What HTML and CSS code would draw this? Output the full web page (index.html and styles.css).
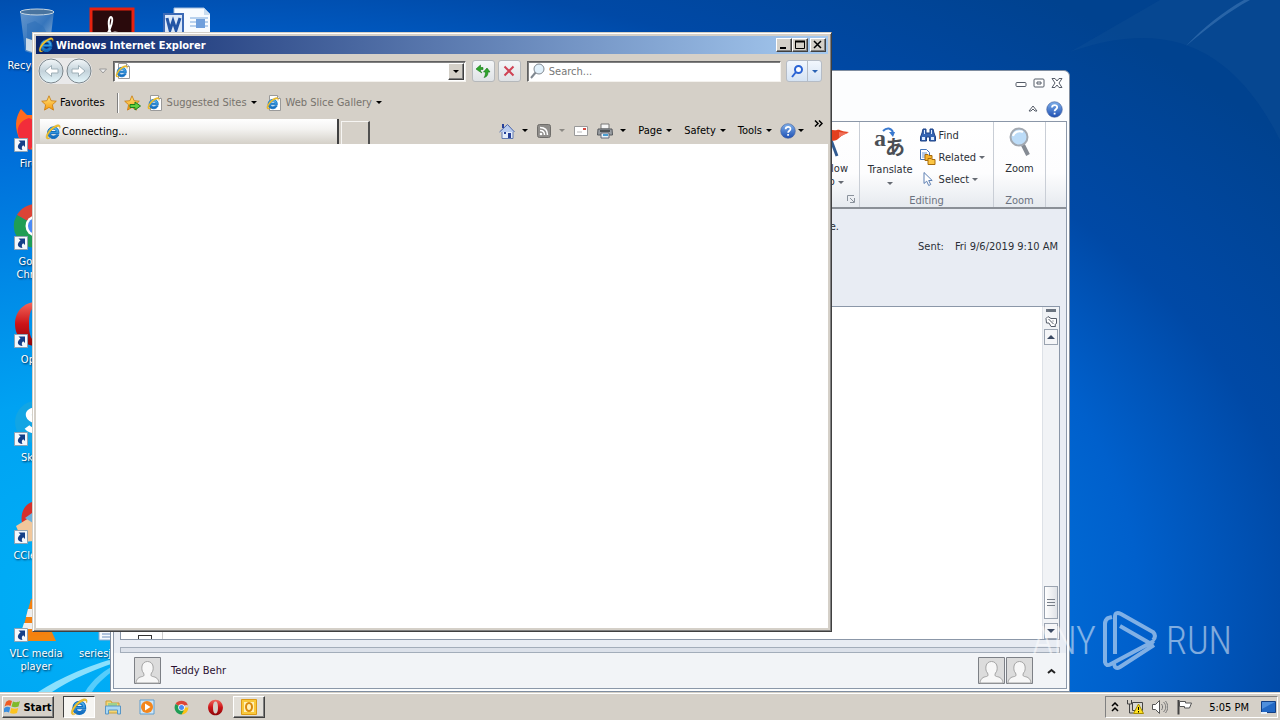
FILE: index.html
```html
<!DOCTYPE html>
<html lang="en">
<head>
    <meta charset="UTF-8">
    <meta name="viewport" content="width=device-width, initial-scale=1.0">
    <title>Desktop</title>
    <link rel="stylesheet" href="styles.css">
</head>
<body>
    <!-- shared icons -->
    <svg class="sprite" aria-hidden="true">
        <defs>
            <linearGradient id="g-ie" x1="0" y1="0" x2="0" y2="1"><stop offset="0" stop-color="#5fc3f5"/><stop offset="1" stop-color="#0b62b8"/></linearGradient>
            <linearGradient id="g-bin" x1="0" y1="0" x2="1" y2="1"><stop offset="0" stop-color="#a9c4dc" stop-opacity=".6"/><stop offset=".5" stop-color="#4d83bd" stop-opacity=".7"/><stop offset="1" stop-color="#d5e2ea" stop-opacity=".9"/></linearGradient>
            <linearGradient id="g-opera" x1="0" y1="0" x2="0" y2="1"><stop offset="0" stop-color="#f2675c"/><stop offset=".5" stop-color="#cc1418"/><stop offset="1" stop-color="#8c0508"/></linearGradient>
            <linearGradient id="g-nav" x1="0" y1="0" x2="0" y2="1"><stop offset="0" stop-color="#f4f8fa"/><stop offset=".5" stop-color="#c3d2da"/><stop offset="1" stop-color="#e6f8fd"/></linearGradient>
            <linearGradient id="g-star" x1="0" y1="0" x2="0" y2="1"><stop offset="0" stop-color="#ffe680"/><stop offset="1" stop-color="#f79a0c"/></linearGradient>
            <linearGradient id="g-help" x1="0" y1="0" x2="0" y2="1"><stop offset="0" stop-color="#7fb0ea"/><stop offset="1" stop-color="#1d4fb4"/></linearGradient>
        </defs>
        <symbol id="ie" viewBox="0 0 16 16">
            <path d="M13.9 9.6H5.6c.1 1.600 1.300 2.500 2.900 2.500 1.100 0 2-.5 2.500-1.300h2.700c-.8 2.300-2.800 3.700-5.300 3.700-3.400 0-5.800-2.400-5.800-5.700 0-3.400 2.500-5.900 5.900-5.900 3.300 0 5.400 2.400 5.400 5.700zM5.700 7.500h5.400C11 6 9.900 5.200 8.500 5.200S6 6 5.700 7.500z" fill="url(#g-ie)" stroke="#0d6fc4" stroke-width="1"/>
            <path d="M2.600 14.900C.2 14.700.700 10.500 4 6.600 7.600 2.300 12.700-.4 14.600 1.200c.9.800.7 2.100.1 3.300.2-1.300-.1-2-1.100-2.100-2.200-.1-5.700 2.200-8.300 5.300-2.300 2.800-3.300 5.600-2 6.200.6.300 1.500 0 2.300-.5-.9.900-2 1.600-3 1.500z" fill="#f6c52c" stroke="#b98b10" stroke-width=".3"/>
        </symbol>
        <symbol id="iepage" viewBox="0 0 16 16">
            <path d="M3.500.5h8l3 3v12h-11z" fill="#fff" stroke="#9a9a9a"/>
            <path d="M11.500.5v3h3" fill="#e6e6e6" stroke="#9a9a9a"/>
            <svg x="0" y="2" width="13" height="13" viewBox="0 0 16 16"><use href="#ie"/></svg>
        </symbol>
        <symbol id="star" viewBox="0 0 16 16">
            <path d="M8 .8l2.100 4.900 5.200.500-3.900 3.600 1.100 5.300L8 12.400l-4.500 2.700 1.100-5.300L.7 6.200l5.200-.5z" fill="url(#g-star)" stroke="#c9780a" stroke-width=".8"/>
        </symbol>
        <symbol id="shortcut" viewBox="0 0 14 14">
            <path d="M.5.500h13v13H.5z" fill="#f4f8fc" stroke="#8fa3b5"/>
            <path d="M4.500 2.500H11v6.500L9.200 7.200C7.500 8.500 7.500 10 8.500 12 4 12 1.800 8 6.500 4.500z" fill="#143f88"/>
        </symbol>
        <symbol id="person" viewBox="0 0 27 27">
            <path d="M.5.500h26v26H.5z" fill="#dcdcdc" stroke="#7d8086"/>
            <path d="M2 26c.5-4.500 3-6 6.500-6.500 2-.4 1.700-2 1-3.500C8 14.500 7.500 12 8 9c.6-3 3-4.500 5.500-4.500S18.400 6 19 9c.5 3 0 5.500-1.500 7-.7 1.500-1 3.100 1 3.500 3.500.5 6 2 6.500 6.500z" fill="#f7f7f7" stroke="#a4a4a4"/>
        </symbol>
        <symbol id="chrome" viewBox="0 0 48 48">
            <path d="M24 24L4.900 13A22 22 0 0 1 43 13z" fill="#dc4437"/>
            <path d="M24 24h21.500L43 13a22 22 0 0 1-19 33z" fill="#fbc116"/>
            <path d="M24 24l7 10-7 12A22 22 0 0 1 4.900 13z" fill="#1f9d55"/>
            <path d="M24 13h19v4z" fill="#dc4437"/>
            <circle cx="24" cy="24" r="10.500" fill="#fff"/>
            <circle cx="24" cy="24" r="8" fill="#4a8af4"/>
        </symbol>
        <symbol id="opera" viewBox="0 0 48 48">
            <path fill-rule="evenodd" d="M24 2c12 0 21 9.500 21 22s-9 22-21 22S3 36.500 3 24 12 2 24 2zm0 5c-5 0-7 7-7 17s2 17 7 17 7-7 7-17-2-17-7-17z" fill="url(#g-opera)"/>
        </symbol>
        <symbol id="help" viewBox="0 0 16 16">
            <circle cx="8" cy="8" r="7.300" fill="url(#g-help)" stroke="#44609c" stroke-width=".6"/>
            <path d="M5.600 6.200C5.700 3 10.700 3.200 10.500 6c-.1 1.700-2.400 1.800-2.400 3.700M8.100 11v1.800" fill="none" stroke="#fff" stroke-width="1.700"/>
        </symbol>
    </svg>

    <main class="desktop">
        <svg class="rays" viewBox="0 0 1280 692" preserveAspectRatio="none" aria-hidden="true">
            <path d="M38 692C60 678 90 664 130 654L130 658C96 668 70 680 52 692z" fill="#b8f1ff" opacity=".75"/>
            <path d="M85 692C92 680 104 670 120 662L122 665C108 674 98 682 92 692z" fill="#8fe2ff" opacity=".6"/>
            <path d="M1186 46C1210 26 1228 12 1250 0L1244 0C1224 11 1204 27 1186 46z" fill="#5f93cc" opacity=".4"/>
            <path d="M1070 52L1160 0H1280V140C1230 40 1160 20 1070 52z" fill="#3a74a8" opacity=".1"/>
        </svg>

        <div class="icons">
            <a href="#" class="shortcut r1 c1">
                <svg class="pic" viewBox="0 0 48 48"><path d="M8 5h34l-5 40c-8 3-17 3-24 0z" fill="url(#g-bin)"/><path d="M15 18l8-3 9 6 5 12-9 8-13-8z" fill="#2f6fb8" opacity=".6"/><ellipse cx="25" cy="6" rx="17" ry="3" fill="#49749f" stroke="#c8d8e4"/><path d="M14 32l6 2v12l-6-2z" fill="#eef2f2" opacity=".8"/></svg>
                <span>Recycle Bin</span>
            </a>
            <a href="#" class="shortcut r1 c2">
                <svg class="pic" viewBox="0 0 48 48"><path d="M4 3h42v43H4z" fill="#2a0a0c" stroke="#e8220f" stroke-width="3"/><path d="M24 28c-3-6-3-16 0-17 3 1 0 12-5 19 4-3 8-4 12-3" fill="none" stroke="#fff" stroke-width="2"/></svg>
                <span>Acrobat Reader</span>
            </a>
            <a href="#" class="shortcut r1 c3">
                <svg class="pic" viewBox="0 0 48 48"><path d="M12 2h30l7 7v37H12z" fill="#f7fbff" stroke="#a4bddb"/><path d="M42 2v7h6z" fill="#c8dcf0"/><path d="M28 12h18M28 16h18M28 20h18" stroke="#79a7dc"/><path d="M34 13h9v9h-9z" fill="#6f9fdc"/><path d="M2 8h19v20H2z" fill="#dce8f8" stroke="#3b69b5" stroke-width="2"/><path d="M5 12l3 12 3-9 3 9 4-12" fill="none" stroke="#2355a5" stroke-width="3"/></svg>
                <span>Word</span>
            </a>
            <a href="#" class="shortcut r2 c1">
                <svg class="pic" viewBox="0 0 48 48"><path d="M5 28C2 16 7 8 9 5l6 6h6l5-5 2 8c12 2 17 8 16 18-2 10-10 14-20 14S8 40 5 28z" fill="#ff6a1d"/><path d="M7 33C3 22 10 16 17 14l9 4 4 10-12 18C12 43 9 40 7 33z" fill="#f22d3a"/></svg>
                <svg class="arrow"><use href="#shortcut"/></svg>
                <span>Firefox</span>
            </a>
            <a href="#" class="shortcut r3 c1">
                <svg class="pic"><use href="#chrome"/></svg>
                <svg class="arrow"><use href="#shortcut"/></svg>
                <span>Google Chrome</span>
            </a>
            <a href="#" class="shortcut r4 c1">
                <svg class="pic"><use href="#opera"/></svg>
                <svg class="arrow"><use href="#shortcut"/></svg>
                <span>Opera</span>
            </a>
            <a href="#" class="shortcut r5 c1">
                <svg class="pic" viewBox="0 0 48 48"><circle cx="24" cy="24" r="21" fill="#12a5e4"/><path d="M32 15c-5-5-17-3-15 3 2 7 15 3 15 10 0 6-13 6-17 1" fill="none" stroke="#fff" stroke-width="6"/></svg>
                <svg class="arrow"><use href="#shortcut"/></svg>
                <span>Skype</span>
            </a>
            <a href="#" class="shortcut r6 c1">
                <svg class="pic" viewBox="0 0 48 48"><path d="M36 8C20-1 7 11 10 27c2 14 16 20 27 14l-4-9c-7 3-12-1-12-8s5-10 12-7z" fill="#d6302b"/><path d="M4 30l13-8 12 4 4 18-22 2z" fill="#f1c79b"/><path d="M13 22l7-5 5 4-4 6z" fill="#6cb1de"/></svg>
                <svg class="arrow"><use href="#shortcut"/></svg>
                <span>CCleaner</span>
            </a>
            <a href="#" class="shortcut r7 c1">
                <svg class="pic" viewBox="0 0 48 48"><path d="M7 36h32l5 11H3z" fill="#f28410"/><path d="M19 5h8l10 33c-8 5-19 5-27 0z" fill="#f5800e"/><path d="M16 15h14l2 8H14zM12 29h22l2 6H10z" fill="#eee"/></svg>
                <svg class="arrow"><use href="#shortcut"/></svg>
                <span>VLC media player</span>
            </a>
            <a href="#" class="shortcut file r7 c2">
                <svg class="pic" viewBox="0 0 48 48"><path d="M12 2h26v44H12z" fill="#f6f9fd" stroke="#8aa9cf"/><path d="M15 36h20M15 40h20M15 43h20" stroke="#6d8fc0"/></svg>
                <span>seriesja</span>
            </a>
        </div>

        <!-- mail message window -->
        <section class="mail" aria-label="Message">
            <div class="mail-title">
                <button aria-label="Minimize"><svg width="12" height="10" viewBox="0 0 12 10"><rect x="1" y="4.500" width="10" height="4" rx="1" fill="#fff" stroke="#555c68"/></svg></button>
                <button aria-label="Restore"><svg width="12" height="10" viewBox="0 0 12 10"><rect x="1" y="1" width="10" height="8" rx="1" fill="#fff" stroke="#555c68"/><path d="M4 4h4v2H4z" fill="none" stroke="#555c68"/></svg></button>
                <button aria-label="Close"><svg width="12" height="10" viewBox="0 0 12 10"><path d="M1 .500h3l2 2.500L8 .500h3L8 5l3 4.500H8L6 7 4 9.500H1L4 5z" fill="#fff" stroke="#555c68"/></svg></button>
            </div>
            <div class="mail-tabs">
                <button aria-label="Minimize the ribbon"><svg width="10" height="8" viewBox="0 0 10 8"><path d="M1 6l4-5 4 5H7L5 4 3 6z" fill="#fff" stroke="#555c68"/></svg></button>
                <button aria-label="Help"><svg width="17" height="17"><use href="#help"/></svg></button>
            </div>
            <div class="mail-inner">
                <div class="ribbon">
                    <div class="group follow">
                        <button class="big">
                            <svg width="32" height="32" viewBox="0 0 32 32"><path d="M4 2l3-1 6 30h-3z" fill="#2f5f9a"/><path d="M14 14l6 16" stroke="#315b91" stroke-width="3"/><path d="M5 3c6-4 9 3 15 1 3-1 4 2 12 2-4 2-7 3-11 7-4 4-9-1-13 3z" fill="#e2401d"/><path d="M22 6l9 1-9 4z" fill="#f0705a"/></svg>
                            <span>Follow</span><span>Up <i class="caret"></i></span>
                        </button>
                        <svg class="launcher" width="8" height="8" viewBox="0 0 8 8"><path d="M.5 6V.500H7M3 3l4 4M7.500 3v4.500H3" fill="none" stroke="#8a929c"/></svg>
                    </div>
                    <div class="group editing">
                        <div class="group-body">
                            <button class="big">
                                <svg width="32" height="32" viewBox="0 0 32 32"><text x="0" y="19" class="glyph">a</text><text x="11" y="28" class="glyph kana">あ</text><path d="M9 4c4-4 8-3 10 1" fill="none" stroke="#3a79cf" stroke-width="2"/><path d="M15 5h6l-2 5z" fill="#3a79cf"/></svg>
                                <span>Translate</span><span><i class="caret"></i></span>
                            </button>
                            <div class="small-list">
                                <button><svg width="16" height="16" viewBox="0 0 16 16"><path d="M3 2h3v4h4V2h3l1 4 1.500 4v4H9.500v-4h-3v4H.5v-4L2 6z" fill="#3565b4" stroke="#1f4284"/><path d="M2 10h3v3H2zM11 10h3v3h-3zM4 3h1v4H4zM11 3h1v4h-1z" fill="#dcebff"/></svg>Find</button>
                                <button><svg width="16" height="16" viewBox="0 0 16 16"><path d="M.5.500h6l3 3v7h-9z" fill="#fff" stroke="#4474b8"/><path d="M2 4h5M2 6h5M2 8h5" stroke="#6e98d4"/><path d="M5 5.500h3l1 1h3v5H5z" fill="#f7b32b" stroke="#a76b0d"/><path d="M8 9.500h3l1 1h3v5H8z" fill="#fcc644" stroke="#a76b0d"/></svg>Related <i class="caret"></i></button>
                                <button><svg width="16" height="16" viewBox="0 0 16 16"><path d="M4 1.500v11l2.700-2.300 2 4.300 2-1-2-4h3.500z" fill="#fff" stroke="#5d7fb2"/></svg>Select <i class="caret"></i></button>
                            </div>
                        </div>
                        <span class="group-name">Editing</span>
                    </div>
                    <div class="group zoom">
                        <button class="big">
                            <svg width="32" height="32" viewBox="0 0 32 32"><path d="M19 19l5 10" stroke="#858b93" stroke-width="4"/><circle cx="15" cy="11" r="8.500" fill="#bcdcf8" stroke="#a3a9b1" stroke-width="2"/><path d="M9 10c1-4 6-6 10-4" fill="none" stroke="#fff" stroke-width="2"/></svg>
                            <span>Zoom</span>
                        </button>
                        <span class="group-name">Zoom</span>
                    </div>
                </div>
                <div class="mail-head">
                    <p class="info">e.</p>
                    <p class="sent"><span>Sent:</span><span>Fri 9/6/2019 9:10 AM</span></p>
                </div>
                <div class="mail-body">
                    <div class="page"><div class="sheet"><i></i></div></div>
                    <div class="scroll">
                        <i class="split"></i>
                        <svg width="12" height="12" viewBox="0 0 12 12"><path d="M1 3.500l2-2 3 2h5.500v5l-1.500 1 .5 2H6l-2-3.500H1.500z" fill="#fff" stroke="#555c68"/><path d="M3.500 4l5 5M8 5.500v1" stroke="#555c68"/></svg>
                        <button class="up" aria-label="Scroll up"></button>
                        <div class="thumb"></div>
                        <button class="down" aria-label="Scroll down"></button>
                    </div>
                </div>
                <div class="splitter"></div>
                <div class="people">
                    <svg width="27" height="27"><use href="#person"/></svg>
                    <span>Teddy Behr</span>
                    <svg class="push" width="27" height="27"><use href="#person"/></svg>
                    <svg width="27" height="27"><use href="#person"/></svg>
                    <button aria-label="Expand people pane"><svg width="9" height="6" viewBox="0 0 9 6"><path d="M1 5l3.500-3L8 5" fill="none" stroke="#222" stroke-width="2"/></svg></button>
                </div>
            </div>
        </section>

        <!-- browser window -->
        <section class="browser" aria-label="Windows Internet Explorer">
            <div class="titlebar">
                <svg width="16" height="16"><use href="#ie"/></svg>
                <h1>Windows Internet Explorer</h1>
                <button aria-label="Minimize"><svg width="12" height="10" viewBox="0 0 12 10"><path d="M2 8h6" stroke="#000" stroke-width="2"/></svg></button>
                <button aria-label="Maximize"><svg width="12" height="10" viewBox="0 0 12 10"><path d="M1.500 1.500h9v7h-9z" fill="none" stroke="#000"/><path d="M1 1.500h10" stroke="#000" stroke-width="2"/></svg></button>
                <button class="close" aria-label="Close"><svg width="12" height="10" viewBox="0 0 12 10"><path d="M2 1l7 7M9 1L2 8" stroke="#000" stroke-width="1.500"/></svg></button>
            </div>
            <div class="navbar">
                <div class="travel">
                    <button aria-label="Back"><svg width="26" height="26" viewBox="0 0 26 26"><circle cx="13" cy="13" r="12" fill="url(#g-nav)" stroke="#7c868c"/><path d="M20 11v4h-6.500v3.500L7 13l6.500-5.500V11z" fill="#fff" stroke="#9fb0b8"/></svg></button>
                    <button aria-label="Forward"><svg width="26" height="26" viewBox="0 0 26 26"><circle cx="13" cy="13" r="12" fill="url(#g-nav)" stroke="#7c868c"/><path d="M6 11v4h6.500v3.500L19 13l-6.500-5.500V11z" fill="#fff" stroke="#9fb0b8"/></svg></button>
                </div>
                <button class="recent" aria-label="Recent pages"><svg width="8" height="6" viewBox="0 0 8 6"><path d="M.5 1h7L4 5z" fill="#eee" stroke="#999"/></svg></button>
                <div class="field address">
                    <svg width="16" height="16"><use href="#iepage"/></svg>
                    <input type="text" aria-label="Address">
                    <button aria-label="Show addresses"><i class="caret"></i></button>
                </div>
                <button class="tool" aria-label="Refresh"><svg width="16" height="16" viewBox="0 0 16 16"><path d="M1 6l4.500-4v2.500H8v2H5.500C5.500 8 6 9 7 10L4.500 8.500 1 6zM15 9h-2c0 3-1 5-4 5.500 1-1 1.500-3 1.500-5.500H8.500l3.500-4z" fill="#2fa52b" stroke="#157a1a" stroke-width=".6"/></svg></button>
                <button class="tool" aria-label="Stop"><svg width="16" height="16" viewBox="0 0 16 16"><path d="M3.500 3.500l9 9M12.500 3.500l-9 9" stroke="#cf4254" stroke-width="2"/></svg></button>
                <div class="field search">
                    <svg width="16" height="16" viewBox="0 0 16 16"><path d="M6 9l-5 6" stroke="#808890" stroke-width="2"/><circle cx="9" cy="6" r="5" fill="#e2f1fb" stroke="#808890"/></svg>
                    <input type="text" aria-label="Search" placeholder="Search...">
                </div>
                <div class="go">
                    <button aria-label="Search"><svg width="14" height="14" viewBox="0 0 14 14"><path d="M6 8l-4 5" stroke="#2a63d4" stroke-width="2"/><circle cx="8.500" cy="5.500" r="3.500" fill="#fff" stroke="#2a63d4" stroke-width="2"/></svg></button>
                    <button aria-label="Search options"><i class="caret blue"></i></button>
                </div>
            </div>
            <div class="favbar">
                <button class="fav"><svg width="16" height="16"><use href="#star"/></svg>Favorites</button>
                <button aria-label="Add to Favorites bar"><svg width="17" height="16" viewBox="0 0 17 16"><use href="#star" width="16" height="16"/><path d="M6 9.500h5V7l5.500 4-5.500 4v-2.500H6z" fill="#62cf3e" stroke="#1f7f1e"/></svg></button>
                <a href="#"><svg width="16" height="16"><use href="#iepage"/></svg>Suggested Sites <i class="caret"></i></a>
                <a href="#"><svg width="16" height="16"><use href="#iepage"/></svg>Web Slice Gallery <i class="caret"></i></a>
            </div>
            <div class="tabbar">
                <button class="tab"><svg width="16" height="16"><use href="#ie"/></svg>Connecting...</button>
                <button class="newtab" aria-label="New tab"></button>
                <div class="commands">
                    <button aria-label="Home"><svg width="16" height="16" viewBox="0 0 16 16"><path d="M3 8v7.500h11V8" fill="#e4edfa" stroke="#6079b0"/><path d="M.5 9L8.500 1.500 15.500 9" fill="#b8cbee" stroke="#4a64a8"/><path d="M3 1h2v4H3zM9 10h3v5H9z" fill="#26409a"/><path d="M5 9h2v2H5z" fill="#26409a"/></svg><i class="caret"></i></button>
                    <button aria-label="Feeds"><svg width="16" height="14" viewBox="0 0 16 14"><rect x="1.500" y=".5" width="13" height="13" rx="2" fill="#8f8d8a" stroke="#6f6d6a"/><circle cx="5" cy="10" r="1.300" fill="#fff"/><path d="M4 6.500c3 0 4.500 1.500 4.500 4.500M4 3.500c5 0 7.500 2.500 7.500 7.500" fill="none" stroke="#fff" stroke-width="1.500"/></svg><i class="caret dim"></i></button>
                    <button aria-label="Read mail"><svg width="16" height="12" viewBox="0 0 16 12"><path d="M1.500 1.500h13v9h-13z" fill="#fff" stroke="#999"/><path d="M10 3h3v2h-3z" fill="#d44c43"/><path d="M4 7h5" stroke="#bbb"/></svg></button>
                    <button aria-label="Print"><svg width="16" height="16" viewBox="0 0 16 16"><path d="M4 1h8v5H4z" fill="#f6f6f6" stroke="#777"/><path d="M1 6h14l.5 6H.5z" fill="#9b9fa4" stroke="#55585c"/><path d="M3 7h10v2H3z" fill="#4c4f53"/><path d="M4 10h8v5H4z" fill="#e7f2fb" stroke="#667"/><path d="M6 12h5" stroke="#4a9bd0" stroke-width="2"/></svg><i class="caret"></i></button>
                    <button class="word">Page <i class="caret"></i></button>
                    <button class="word">Safety <i class="caret"></i></button>
                    <button class="word">Tools <i class="caret"></i></button>
                    <button class="helper" aria-label="Help"><svg width="16" height="16"><use href="#help"/></svg><i class="caret"></i></button>
                    <button class="more" aria-label="More commands"><svg width="9" height="7" viewBox="0 0 9 7"><path d="M1 .500l3 3-3 3M5 .500l3 3-3 3" fill="none" stroke="#000" stroke-width="1.500"/></svg></button>
                </div>
            </div>
            <div class="viewport"></div>
        </section>

        <div class="watermark">
            <span>ANY</span>
            <svg width="58" height="62" viewBox="0 0 58 62"><path d="M10 7L6 8Q3 10 3 14V52Q4 57 9 54L52 31M13 44V7Q13 1 19 4L51 22Q55 26 51 30M18 16L51 35M52 35L18 57Q13 60 12 54" fill="none" stroke="#fff" stroke-width="4"/></svg>
            <span>RUN</span>
        </div>
    </main>

    <footer class="taskbar">
        <button class="start"><svg width="18" height="18" viewBox="0 0 18 18"><path d="M2 4c2-2 4-2 6-1L6.500 8C5 7 3 7 .5 8.500z" fill="#ee5b23"/><path d="M9 3.500c2 1 5 1 7-.5l-1.500 5.500c-2 1-5 1-7 0z" fill="#7fba2c"/><path d="M.3 10c2-1.500 4-1.500 6-.5L5 14.500c-2-1-4-1-6 .5z" fill="#3a8ede"/><path d="M7.200 10c2 1 5 1 7 0L13 15c-2 1-5 1-7 0z" fill="#fcc31f"/></svg>Start</button>
        <button class="task active" aria-label="Internet Explorer"><svg width="18" height="18"><use href="#ie"/></svg></button>
        <button class="task" aria-label="Windows Explorer"><svg width="18" height="18" viewBox="0 0 18 18"><path d="M2 3h5l1 2h7v10H2z" fill="#f4d675" stroke="#c8a03a"/><path d="M4 5h9v3H4z" fill="#9fd18b"/><path d="M1.500 8h15v8h-3v-4h-9v4h-3z" fill="#a9d8f4" stroke="#5896c6"/></svg></button>
        <button class="task" aria-label="Media Player"><svg width="18" height="18" viewBox="0 0 18 18"><path d="M2 2h14v14H2z" fill="#cfe6f7" stroke="#5f9fd0"/><circle cx="9" cy="9" r="6" fill="#f3861c"/><path d="M7 5.500L12.500 9 7 12.500z" fill="#fff"/></svg></button>
        <button class="task" aria-label="Chrome"><svg width="15" height="15"><use href="#chrome"/></svg></button>
        <button class="task" aria-label="Opera"><svg width="17" height="17"><use href="#opera"/></svg></button>
        <button class="task open" aria-label="Outlook"><svg width="18" height="18" viewBox="0 0 18 18"><path d="M1.500 1.500h15v15h-15z" fill="#f9c93c" stroke="#dd9a16"/><path d="M4 4h10v10H4z" fill="#fff0b8"/><ellipse cx="9" cy="9" rx="3" ry="4" fill="none" stroke="#d98a0e" stroke-width="2"/></svg></button>
        <div class="tray">
            <svg width="8" height="10" viewBox="0 0 8 10"><path d="M1 4l3-3 3 3M1 9l3-3 3 3" fill="none" stroke="#000" stroke-width="1.500"/></svg>
            <svg width="17" height="16" viewBox="0 0 17 16"><path d="M5.500 3.500h10v8h-10z" fill="#d9d9d3" stroke="#444"/><path d="M.5 1v4h4V1M2.500 5v9h4" fill="none" stroke="#444"/><path d="M11.500 5l5 9.500h-10z" fill="#ffe11f" stroke="#a58b00"/><path d="M11.500 8v3M11.500 12v1.500" stroke="#000"/></svg>
            <svg width="16" height="16" viewBox="0 0 16 16"><path d="M.5 5.500h3l4-4v13l-4-4h-3z" fill="#fff" stroke="#555"/><path d="M9.500 5c1.500 2 1.500 4 0 6M11.500 3c3 3 3 7 0 10M13.500 2c3 4 3 8 0 12" fill="none" stroke="#777"/></svg>
            <svg width="17" height="16" viewBox="0 0 17 16"><path d="M2.500 1v14.500" stroke="#444" stroke-width="2"/><path d="M3.500 2.500h6v1.500h6l-2 5h-5V7.500h-5z" fill="#fff" stroke="#555"/></svg>
            <time>5:05 PM</time>
            <button aria-label="Show desktop"><svg width="15" height="13" viewBox="0 0 15 13"><path d="M.5.500h14v11H.5z" fill="#2268c4" stroke="#123f85"/><path d="M1 1h13L1 8z" fill="#4f8fdc"/><path d="M0 11h6v2H0z" fill="#e9f0f8"/></svg></button>
        </div>
    </footer>
</body>
</html>
```
FILE: styles.css
```css
* {
    box-sizing: border-box;
}
body {
    margin: 0;
    height: 100vh;
    display: flex;
    flex-direction: column;
    overflow: hidden;
    font-family: "DejaVu Sans Condensed", "DejaVu Sans", "Noto Sans CJK JP", sans-serif;
    font-size: 11px;
    line-height: 13px;
    color: #000;
}
button,
input {
    font: inherit;
    color: inherit;
    margin: 0;
    padding: 0;
    border: 0;
    background: none;
}
button {
    display: flex;
    align-items: center;
    justify-content: center;
    white-space: nowrap;
}
a {
    color: inherit;
    text-decoration: none;
}
p,
h1 {
    margin: 0;
}
svg {
    display: block;
    flex: none;
}
.sprite {
    position: absolute;
    width: 0;
    height: 0;
}
.caret {
    display: inline-block;
    flex: none;
    width: 0;
    height: 0;
    border: 3px solid transparent;
    border-top-color: #000;
    border-bottom: 0;
    vertical-align: middle;
}
.caret.blue {
    border-top-color: #2a63b4;
}
.caret.dim {
    border-top-color: #8c8984;
}

/* desktop */
.desktop {
    position: relative;
    flex: 1;
    min-height: 0;
    overflow: hidden;
    background: radial-gradient(ellipse 1090px 620px at 190px 600px, #00b4f8 0%, #00a2f2 35%, #0088e6 55%, #0070da 73%, #0060cc 87%, #0049a6 102%, #00428f 125%);
}
.rays {
    position: absolute;
    inset: 0;
    width: 100%;
    height: 100%;
}
.icons {
    display: grid;
    grid-template-columns: repeat(3, 72px);
    grid-auto-rows: 98px;
    column-gap: 3px;
    padding-top: 6px;
    color: #fff;
    text-shadow: 1px 1px 2px #024;
}
.shortcut {
    position: relative;
    display: flex;
    flex-direction: column;
    align-items: center;
    text-align: center;
    padding: 0 4px;
}
.pic {
    width: 48px;
    height: 48px;
    margin-bottom: 5px;
}
.arrow {
    position: absolute;
    left: 14px;
    top: 34px;
    width: 14px;
    height: 14px;
}
.file {
    align-items: flex-start;
}
.file .pic {
    align-self: center;
}
.r1 { grid-row: 1; }
.r2 { grid-row: 2; }
.r3 { grid-row: 3; }
.r4 { grid-row: 4; }
.r5 { grid-row: 5; }
.r6 { grid-row: 6; }
.r7 { grid-row: 7; }
.c1 { grid-column: 1; }
.c2 { grid-column: 2; }
.c3 { grid-column: 3; }

/* mail window */
.mail {
    position: absolute;
    left: 110px;
    right: 210px;
    top: 70px;
    bottom: 0;
    display: flex;
    flex-direction: column;
    padding: 0 2px 2px;
    background: #fcfdfe;
    border: 1px solid #7f8da0;
    border-radius: 6px 6px 0 0;
    color: #2b2f36;
}
.mail-title,
.mail-tabs {
    display: flex;
    justify-content: flex-end;
    align-items: center;
    padding-right: 4px;
    gap: 6px;
    height: 24px;
}
.mail-tabs {
    height: 26px;
    gap: 8px;
    padding-top: 2px;
}
.mail-inner {
    flex: 1;
    min-height: 0;
    display: flex;
    flex-direction: column;
    border: 1px solid #8b97a8;
    background: #e8ecf3;
}
.ribbon {
    display: flex;
    justify-content: flex-end;
    height: 87px;
    padding-right: 20px;
    background: linear-gradient(#fff, #fdfdfe 60%, #e6eaef);
    border-bottom: 2px solid #8b9097;
}
.ribbon .caret {
    border-top-color: #666b73;
}
.group {
    display: flex;
    flex-direction: column;
    align-items: center;
    justify-content: space-between;
    border-right: 1px solid #c9ced6;
}
.group-name {
    color: #6b7280;
}
.group-body {
    display: flex;
    gap: 7px;
}
.follow {
    width: 54px;
    padding-bottom: 2px;
}
.editing {
    width: 134px;
}
.zoom {
    width: 52px;
}
.big {
    flex-direction: column;
    padding-top: 4px;
}
.big svg {
    margin-bottom: 4px;
    overflow: visible;
}
.launcher {
    align-self: flex-end;
    margin: 0 4px 2px 0;
}
.glyph {
    font: bold 24px "Liberation Serif", serif;
    fill: #4b4f55;
}
.glyph.kana {
    font: bold 20px "Noto Sans CJK JP", sans-serif;
}
.small-list {
    display: flex;
    flex-direction: column;
    padding-top: 2px;
}
.small-list button {
    height: 22px;
    gap: 3px;
    justify-content: flex-start;
}
.mail-head {
    height: 97px;
    padding: 11px 8px 0 0;
    text-align: right;
}
.info {
    padding-right: 219px;
    margin-bottom: 7px;
}
.sent {
    display: flex;
    justify-content: flex-end;
    gap: 11px;
}
.mail-body {
    flex: 1;
    min-height: 0;
    display: flex;
    margin: 0 6px;
    background: #fff;
    border: 1px solid #8b97a8;
}
.page {
    flex: 1;
    display: flex;
    align-items: flex-end;
}
.sheet {
    width: 42px;
    height: 12px;
    padding: 8px 10px 0 17px;
    border-right: 1px solid #ccc;
}
.sheet i {
    display: block;
    height: 4px;
    border: 1px solid #333;
    border-bottom: 0;
}
.scroll {
    width: 17px;
    display: flex;
    flex-direction: column;
    align-items: center;
    padding-right: 1px;
    background: #f1f3f6;
    border-left: 1px solid #dde1e7;
}
.split {
    width: 10px;
    height: 3px;
    margin: 2px 0 3px;
    background: #6b7480;
}
.up,
.down,
.thumb {
    width: 14px;
    height: 16px;
    border: 1px solid #9aa3b0;
    background: #f5f6f8;
}
.up {
    margin-top: 2px;
}
.up::before,
.down::before {
    content: "";
    border: 4px solid transparent;
    border-top: 0;
    border-bottom-color: #3c4a63;
}
.down::before {
    border-top: 4px solid #3c4a63;
    border-bottom: 0;
}
.thumb {
    height: 33px;
    margin: auto 0 4px;
    padding: 12px 2px;
    background: repeating-linear-gradient(#777e88 0 1px, transparent 1px 3px) content-box, linear-gradient(90deg, #fff, #dfe2e7);
}
.splitter {
    height: 6px;
    margin: 7px 6px 0;
    border: 1px solid #a3adba;
    background: #dce1ea;
}
.people {
    display: flex;
    align-items: center;
    gap: 10px;
    height: 35px;
    padding: 0 10px 0 20px;
    background: #f2f4f7;
    color: #2a1030;
}
.push {
    margin-left: auto;
}
.push + svg {
    margin-left: -9px;
    margin-right: 4px;
}

/* browser window */
.browser {
    position: absolute;
    left: 32px;
    right: 448px;
    top: 32px;
    bottom: 60px;
    display: flex;
    flex-direction: column;
    padding: 3px;
    background: #d5d0c8;
    border: 1px solid #d4d0c8;
    border-right-color: #404040;
    border-bottom-color: #404040;
    box-shadow: inset 1px 1px #fff, inset -1px -1px #808080;
}
.titlebar {
    display: flex;
    align-items: center;
    height: 18px;
    padding: 0 2px;
    background: linear-gradient(90deg, #0a246a, #a6caf0);
    color: #fff;
}
.titlebar h1 {
    flex: 1;
    margin-left: 2px;
    font-size: 11px;
    line-height: 13px;
}
.titlebar button,
.address button {
    width: 16px;
    height: 14px;
    background: #d4d0c8;
    border: 1px solid;
    border-color: #fff #404040 #404040 #fff;
    box-shadow: inset -1px -1px #808080;
}
.titlebar .close {
    margin-left: 2px;
}
.navbar {
    display: flex;
    align-items: center;
    height: 34px;
    padding: 0 6px 0 2px;
}
.travel {
    display: flex;
    gap: 2px;
    border-radius: 13px;
    background: #e9e9ea;
}
.recent {
    width: 21px;
}
.field {
    display: flex;
    align-items: center;
    height: 21px;
    padding: 1px;
    background: #fff;
    border: 1px solid #808080;
    border-color: #606060 #f4f2ee #f4f2ee #606060;
    box-shadow: inset 1px 1px #808080;
}
.field input {
    flex: 1;
    min-width: 0;
    outline: 0;
}
.field input::placeholder {
    color: #777;
    opacity: 1;
}
.address {
    flex: 7;
    margin-right: 6px;
}
.address button {
    height: 17px;
}
.tool {
    width: 23px;
    height: 22px;
    margin-right: 3px;
    border: 1px solid #b5b8bb;
    border-radius: 3px;
    background: linear-gradient(#f4f6f8, #dfe2e5);
}
.search {
    flex: 5;
    gap: 3px;
    padding-left: 2px;
    margin: 0 5px 0 3px;
}
.go {
    display: flex;
    height: 22px;
    border: 1px solid #b5bcc6;
    border-radius: 3px;
    background: linear-gradient(#f2f7fd, #d5e3f3);
}
.go button {
    width: 20px;
}
.go button + button {
    width: 14px;
    border-left: 1px solid #b5bcc6;
}
.favbar {
    display: flex;
    align-items: center;
    gap: 6px;
    height: 29px;
    padding-left: 5px;
    color: #77736d;
}
.favbar .fav {
    color: #000;
    height: 20px;
    gap: 3px;
    padding-right: 12px;
    border-right: 1px solid #808080;
    box-shadow: 1px 0 #fff;
}
.favbar a {
    display: flex;
    align-items: center;
    gap: 4px;
    margin-right: 3px;
}
.tabbar {
    display: flex;
    align-items: flex-end;
    height: 27px;
    padding-left: 4px;
}
.tab {
    flex: 0 1 299px;
    justify-content: flex-start;
    gap: 1px;
    height: 25px;
    padding-left: 5px;
    background: linear-gradient(#fff, #f4f3f1 40%, #d4d0c8);
    border-right: 2px solid #404040;
}
.newtab {
    width: 29px;
    height: 23px;
    margin-left: 2px;
    border: 1px solid #f6f5f3;
    border-right: 2px solid #505050;
    border-bottom: 0;
}
.commands {
    display: flex;
    align-items: center;
    height: 27px;
    margin-left: auto;
    padding-right: 5px;
}
.commands button {
    gap: 7px;
    margin-left: 8px;
}
.commands .word {
    gap: 4px;
    margin-left: 12px;
}
.commands .helper {
    gap: 2px;
}
.commands .more {
    align-self: flex-start;
    margin: 3px 0 0 10px;
}
.viewport {
    flex: 1;
    background: #fff;
}

.watermark {
    position: absolute;
    right: 48px;
    bottom: 20px;
    display: flex;
    align-items: center;
    gap: 6px;
    color: #fff;
    opacity: .5;
    font: 300 38px/60px "Roboto Condensed", "Open Sans Condensed", Roboto, sans-serif;
}

/* taskbar */
.taskbar {
    display: flex;
    align-items: center;
    gap: 2px;
    height: 28px;
    padding: 2px 2px 0;
    background: #d5d0c8;
    box-shadow: inset 0 1px #d4d0c8, inset 0 2px #fff;
}
.start {
    height: 22px;
    width: 52px;
    gap: 1px;
    margin-right: 7px;
    font-weight: bold;
    border: 1px solid;
    border-color: #fff #404040 #404040 #fff;
    box-shadow: inset -1px -1px #808080;
}
.task {
    width: 32px;
    height: 22px;
}
.active {
    background: #f6f5f2;
    border: 1px solid;
    border-color: #404040 #fff #fff #404040;
}
.open {
    background: #e2dfd9;
    border: 1px solid;
    border-color: #fff #404040 #404040 #fff;
    box-shadow: inset -1px -1px #808080;
}
.tray {
    display: flex;
    align-items: center;
    gap: 8px;
    height: 22px;
    margin-left: auto;
    padding: 0 1px 0 5px;
    border: 1px solid;
    border-color: #808080 #fff #fff #808080;
}
.tray time {
    margin: 0 4px 0 8px;
}
```
